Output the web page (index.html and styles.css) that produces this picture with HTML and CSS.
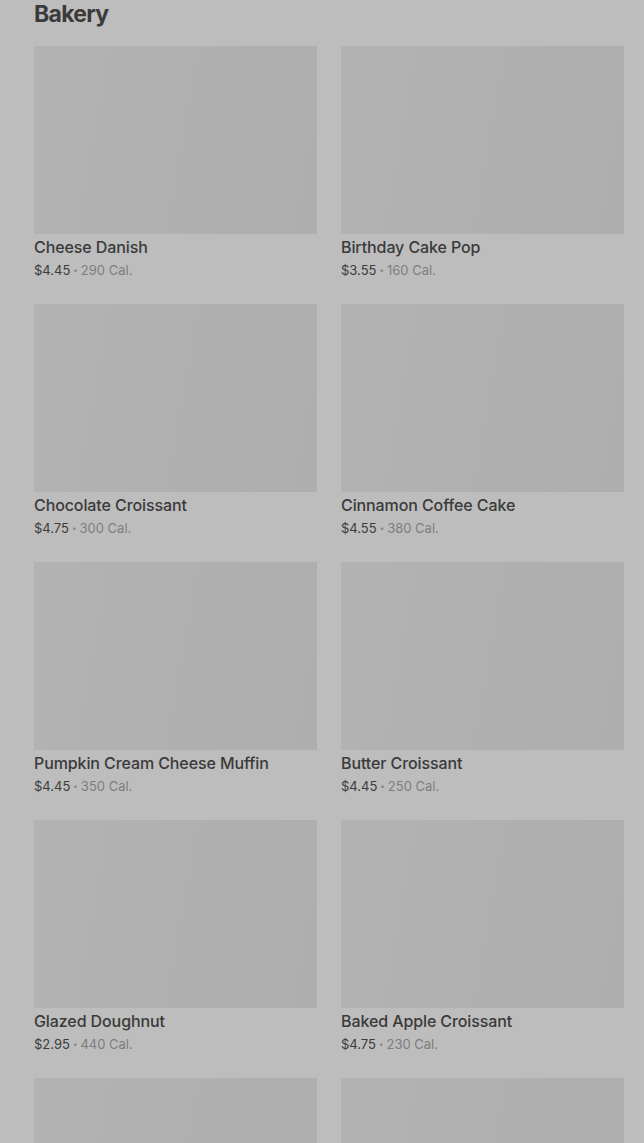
FILE: index.html
```html
<!DOCTYPE html>
<html>
<head>
<meta charset="utf-8">
<link rel="stylesheet" href="styles.css">
</head>
<body>
<main class="menu">
  <h1 class="title">Bakery</h1>
  <div class="grid">
    <div class="card"><div class="thumb"></div><div class="name">Cheese Danish</div><div class="meta"><span class="price">$4.45</span> <span class="dot">•</span> <span class="cal">290 Cal.</span></div></div>
    <div class="card"><div class="thumb"></div><div class="name">Birthday Cake Pop</div><div class="meta"><span class="price">$3.55</span> <span class="dot">•</span> <span class="cal">160 Cal.</span></div></div>
    <div class="card"><div class="thumb"></div><div class="name">Chocolate Croissant</div><div class="meta"><span class="price">$4.75</span> <span class="dot">•</span> <span class="cal">300 Cal.</span></div></div>
    <div class="card"><div class="thumb"></div><div class="name">Cinnamon Coffee Cake</div><div class="meta"><span class="price">$4.55</span> <span class="dot">•</span> <span class="cal">380 Cal.</span></div></div>
    <div class="card"><div class="thumb"></div><div class="name">Pumpkin Cream Cheese Muffin</div><div class="meta"><span class="price">$4.45</span> <span class="dot">•</span> <span class="cal">350 Cal.</span></div></div>
    <div class="card"><div class="thumb"></div><div class="name">Butter Croissant</div><div class="meta"><span class="price">$4.45</span> <span class="dot">•</span> <span class="cal">250 Cal.</span></div></div>
    <div class="card"><div class="thumb"></div><div class="name">Glazed Doughnut</div><div class="meta"><span class="price">$2.95</span> <span class="dot">•</span> <span class="cal">440 Cal.</span></div></div>
    <div class="card"><div class="thumb"></div><div class="name">Baked Apple Croissant</div><div class="meta"><span class="price">$4.75</span> <span class="dot">•</span> <span class="cal">230 Cal.</span></div></div>
    <div class="card"><div class="thumb"></div></div>
    <div class="card"><div class="thumb"></div></div>
  </div>
</main>
</body>
</html>
```
FILE: styles.css
```css
html, body {
  margin: 0;
  padding: 0;
  background: #bdbdbd;
  overflow: hidden;
}
body {
  font-family: Inter, "Noto Sans", sans-serif;
  color: #383838;
}
.menu {
  padding: 0 20px 0 34px;
}
.title {
  margin: 0 0 18px;
  font-size: 23px;
  line-height: 28px;
  font-weight: 700;
  letter-spacing: -0.7px;
  color: #3a3a3a;
}
.grid {
  display: grid;
  grid-template-columns: 283px 283px;
  column-gap: 24px;
  row-gap: 25px;
}
.thumb {
  height: 188px;
  background: linear-gradient(100deg, #b3b3b3 0%, #b0b0b0 50%, #aeaeae 100%);
}
.name {
  margin-top: 3px;
  height: 20px;
  font-size: 16px;
  line-height: 20px;
  font-weight: 500;
  letter-spacing: -0.1px;
  color: #3a3a3a;
}
.meta {
  margin-top: 4px;
  height: 18px;
  font-size: 13px;
  line-height: 18px;
  display: flex;
  align-items: center;
  gap: 3px;
}
.price {
  color: #3c3c3c;
}
.dot {
  color: #858585;
  font-size: 8px;
}
.cal {
  color: #7d7d7d;
}
```
